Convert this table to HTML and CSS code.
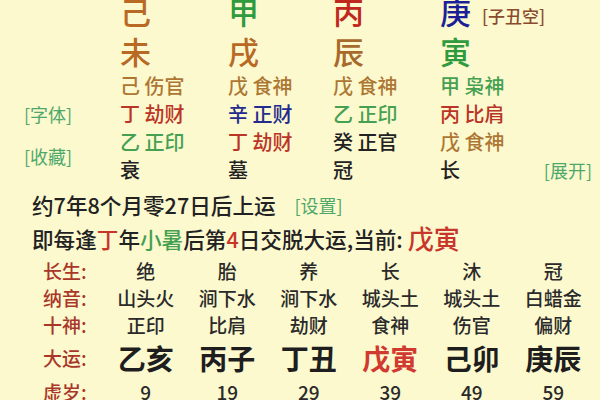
FILE: index.html
```html
<!DOCTYPE html>
<html lang="zh-CN">
<head>
<meta charset="utf-8">
<title>八字排盘</title>
<link rel="stylesheet" href="styles.css">
</head>
<body>
<div class="page">
  <div class="pillars">
    <div></div>
    <div class="big earth">己</div>
    <div class="big wood">甲</div>
    <div class="big fire">丙</div>
    <div class="big metal">庚<span class="kong">[子丑空]</span></div>

    <div></div>
    <div class="big earth">未</div>
    <div class="big earth">戌</div>
    <div class="big earth2">辰</div>
    <div class="big wood">寅</div>

    <div></div>
    <div class="sm earth-s">己 伤官</div>
    <div class="sm earth-s">戊 食神</div>
    <div class="sm earth-s">戊 食神</div>
    <div class="sm wood-s">甲 枭神</div>

    <div class="link">[字体]</div>
    <div class="sm fire-s">丁 劫财</div>
    <div class="sm metal-s">辛 正财</div>
    <div class="sm wood-s">乙 正印</div>
    <div class="sm fire-s">丙 比肩</div>

    <div class="link span2">[收藏]</div>
    <div class="sm wood-s">乙 正印</div>
    <div class="sm fire-s">丁 劫财</div>
    <div class="sm water-s">癸 正官</div>
    <div class="sm earth-s">戊 食神</div>

    <div class="sm water-s">衰</div>
    <div class="sm water-s">墓</div>
    <div class="sm water-s">冠</div>
    <div class="sm water-s last"><span>长</span><span class="link">[展开]</span></div>
  </div>

  <p class="line line1">约7年8个月零27日后上运 <span class="link">[设置]</span></p>
  <p class="line line2">即每逢<span class="red">丁</span>年<span class="green">小暑</span>后第<span class="red">4</span>日交脱大运,当前: <span class="red cur">戊寅</span></p>

  <div class="table">
    <div class="lbl">长生:</div>
    <div class="c">绝</div><div class="c">胎</div><div class="c">养</div><div class="c">长</div><div class="c">沐</div><div class="c">冠</div>

    <div class="lbl">纳音:</div>
    <div class="c">山头火</div><div class="c">涧下水</div><div class="c">涧下水</div><div class="c">城头土</div><div class="c">城头土</div><div class="c">白蜡金</div>

    <div class="lbl">十神:</div>
    <div class="c">正印</div><div class="c">比肩</div><div class="c">劫财</div><div class="c">食神</div><div class="c">伤官</div><div class="c">偏财</div>

    <div class="lbl dy">大运:</div>
    <div class="c dy-c">乙亥</div><div class="c dy-c">丙子</div><div class="c dy-c">丁丑</div><div class="c dy-c now">戊寅</div><div class="c dy-c">己卯</div><div class="c dy-c">庚辰</div>

    <div class="lbl age">虚岁:</div>
    <div class="c age">9</div><div class="c age">19</div><div class="c age">29</div><div class="c age">39</div><div class="c age">49</div><div class="c age">59</div>
  </div>
</div>
</body>
</html>
```

FILE: styles.css
```css
html, body {
  margin: 0;
  padding: 0;
  background: #fcf9cf;
}
body {
  font-family: "Noto Sans CJK SC", "Noto Sans", sans-serif;
  font-weight: 500;
  color: #222;
  overflow: hidden;
  height: 400px;
}
.page {
  width: 600px;
}
.pillars {
  display: grid;
  grid-template-columns: 120px 108px 105px 107px 1fr;
  grid-template-rows: 40px 41px 28px 28px 28px 28px;
  margin-top: -9px;
}
.big {
  font-size: 31px;
  line-height: 40px;
  white-space: nowrap;
}
.sm {
  font-size: 20px;
  line-height: 28px;
  white-space: pre;
}
.earth { color: #b86a24; }
.earth2 { color: #a8692c; }
.wood { color: #2f9a3e; }
.fire { color: #c0281f; }
.metal { color: #1c1f96; }
.earth-s { color: #ad7733; }
.wood-s { color: #45a052; }
.fire-s { color: #bb3526; }
.metal-s { color: #232b8c; }
.water-s { color: #222; }
.kong {
  font-size: 17px;
  color: #8a4b2c;
  margin-left: 11px;
  vertical-align: 1px;
}
.link {
  font-size: 18px;
  font-weight: normal;
  color: #4ea86a;
  line-height: 28px;
  padding-left: 24px;
}
.span2 {
  grid-row: span 2;
  align-self: center;
}
.last {
  display: flex;
  justify-content: space-between;
  padding-right: 8px;
}
.last .link {
  padding-left: 0;
}
.line {
  margin: 0;
  padding-left: 32px;
  font-size: 21.6px;
  white-space: nowrap;
}
.line1 {
  margin-top: 5px;
  line-height: 32px;
}
.line1 .link {
  padding-left: 14px;
  vertical-align: 1px;
}
.line2 {
  line-height: 34px;
}
.red { color: #c8352a; }
.green { color: #45a052; }
.cur {
  font-size: 26px;
  vertical-align: -1px;
}
.table {
  display: grid;
  grid-template-columns: 62px repeat(6, 81.5px);
  grid-template-rows: 27px 27px 27px 40px 28px;
  padding-left: 43px;
  margin-top: 1px;
}
.lbl {
  font-size: 19px;
  color: #a8372a;
  line-height: 27px;
}
.c {
  text-align: center;
  font-size: 19px;
  line-height: 27px;
  color: #2a2a2a;
}
.lbl.dy {
  line-height: 40px;
}
.dy-c {
  font-size: 28px;
  font-weight: bold;
  line-height: 40px;
  color: #1e1e1e;
}
.dy-c.now {
  color: #d03a30;
}
.age {
  line-height: 28px;
}
```
